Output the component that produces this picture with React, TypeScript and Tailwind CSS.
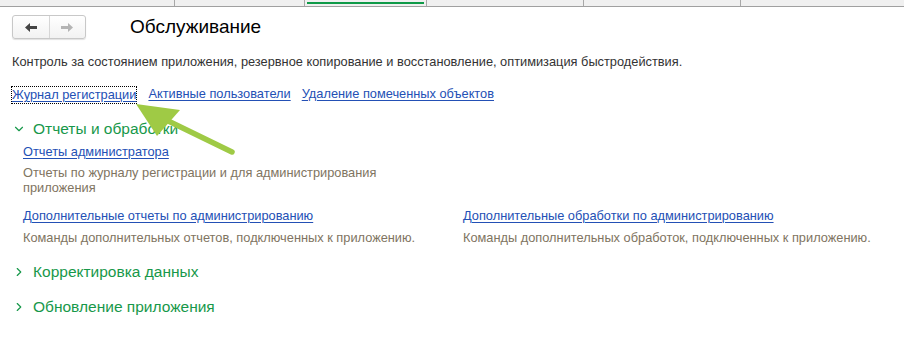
import { ChevronDown, ChevronRight } from "lucide-react";

const link = "text-[#2350b5] underline underline-offset-2 decoration-1";
const note = "text-[#807461]";

function Section({ title, open, children }: { title: string; open?: boolean; children?: React.ReactNode }) {
  return (
    <div>
      <div className="flex items-center h-[24px] pl-[12px] text-[#17984a] text-[15.5px]">
        {open ? (
          <ChevronDown className="w-[14px] h-[14px] mr-[7px]" strokeWidth={2} />
        ) : (
          <ChevronRight className="w-[14px] h-[14px] mr-[7px]" strokeWidth={2} />
        )}
        <span>{title}</span>
      </div>
      {children}
    </div>
  );
}

export default function App() {
  return (
    <div className="relative w-[904px] h-[338px] bg-white overflow-hidden text-[12.8px] text-[#333]" style={{ fontFamily: '"Liberation Sans", Arial, sans-serif' }}>
      {/* tab strip */}
      <div className="flex h-[7px] bg-[#f0f0f0] border-b border-[#a0a0a0]">
        <div className="w-[175px] border-r border-[#a8a8a8]" />
        <div className="w-[130px] border-r border-[#a8a8a8]" />
        <div className="w-[122px] border-r border-[#a8a8a8] px-[2px] pt-[2px]">
          <div className="h-[2px] bg-[#0f9a48]" />
        </div>
        <div className="w-[157px] border-r border-[#a8a8a8]" />
        <div className="w-[157px] border-r border-[#a8a8a8]" />
        <div className="flex-1" />
      </div>

      {/* header */}
      <div className="flex items-center h-[34px] pl-[12px] mt-[3px]">
        <div className="flex h-[24px] w-[74px] rounded-[3px] border border-[#c8c8c8] bg-gradient-to-b from-white to-[#f2f2f2] shadow-[0_1px_1px_rgba(0,0,0,0.12)]">
          <div className="flex-1 flex items-center justify-center border-r border-[#d6d6d6]">
            <svg width="12" height="9" viewBox="0 0 12 9"><path d="M0 4.5 L5 0 V3 H12 V6 H5 V9 Z" fill="#444" /></svg>
          </div>
          <div className="flex-1 flex items-center justify-center">
            <svg width="12" height="9" viewBox="0 0 12 9"><path d="M12 4.5 L7 0 V3 H0 V6 H7 V9 Z" fill="#b4b4b4" /></svg>
          </div>
        </div>
        <div className="ml-[44px] text-[19px] text-black">Обслуживание</div>
      </div>

      <div className="pl-[12px] mt-[10px] leading-[16px]">Контроль за состоянием приложения, резервное копирование и восстановление, оптимизация быстродействия.</div>

      <div className="flex gap-[11px] pl-[11px] mt-[16px] leading-[16px]">
        <span className={`${link} border border-dotted border-black`}>Журнал регистрации</span>
        <span className={link}>Активные пользователи</span>
        <span className={link}>Удаление помеченных объектов</span>
      </div>

      <div className="mt-[13px]">
        <Section title="Отчеты и обработки" open>
          <div className="pl-[23px] pr-[20px] mt-[2px]">
            <div className={`${link} leading-[18px]`}>Отчеты администратора</div>
            <div className={`${note} mt-[4px] leading-[15px] w-[380px]`}>Отчеты по журналу регистрации и для администрирования приложения</div>
            <div className="grid grid-cols-[440px_1fr] mt-[12px]">
              <div>
                <div className={`${link} leading-[18px]`}>Дополнительные отчеты по администрированию</div>
                <div className={`${note} mt-[5px] leading-[15px]`}>Команды дополнительных отчетов, подключенных к приложению.</div>
              </div>
              <div>
                <div className={`${link} leading-[18px]`}>Дополнительные обработки по администрированию</div>
                <div className={`${note} mt-[5px] leading-[15px]`}>Команды дополнительных обработок, подключенных к приложению.</div>
              </div>
            </div>
          </div>
        </Section>
        <div className="mt-[15px]">
          <Section title="Корректировка данных" />
        </div>
        <div className="mt-[11px]">
          <Section title="Обновление приложения" />
        </div>
      </div>

      {/* annotation arrow */}
      <svg className="absolute left-0 top-0 pointer-events-none" width="904" height="338">
        <line x1="232" y1="152" x2="158" y2="116" stroke="#9fca45" strokeWidth="5.5" strokeLinecap="round" />
        <polygon points="136,104 180,110 157,136" fill="#9fca45" />
      </svg>
    </div>
  );
}
